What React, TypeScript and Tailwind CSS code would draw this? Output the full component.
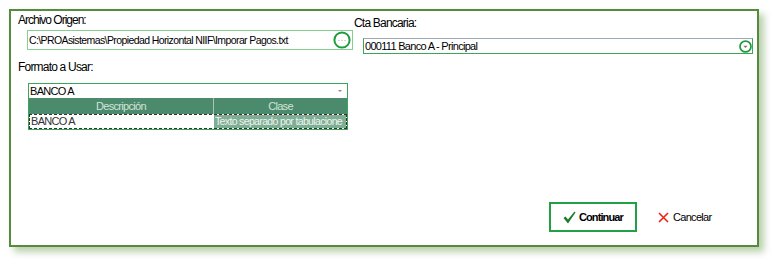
import React from "react";

const font = { fontFamily: '"Liberation Sans", Arial, sans-serif' };

function CircleBtn({ arrow, size }: { arrow?: boolean; size: number }) {
  return (
    <svg width={size} height={size} viewBox="0 0 18 18" className="shrink-0">
      <circle cx="9" cy="9" r="7.6" fill="white" stroke="#1f9a3c" strokeWidth={arrow ? 2.4 : 2} />
      {arrow ? (
        <path d="M6 8 L12 8 L9 11 Z" fill="#777" />
      ) : (
        <g fill="#aaa">
          <rect x="5.5" y="9" width="1" height="1" />
          <rect x="8.5" y="9" width="1" height="1" />
          <rect x="11.5" y="9" width="1" height="1" />
        </g>
      )}
    </svg>
  );
}

export default function App() {
  return (
    <div className="w-[774px] h-[259px] bg-white text-[11px] tracking-[-0.7px] text-black" style={font}>
      <div className="pl-[9px] pt-[9px]">
        <div className="w-[750px] h-[238px] border-2 border-[#568a3f] bg-white shadow-[5px_5px_7px_rgba(100,150,70,0.45)] flex flex-col">
          <div className="flex">
            <div className="w-[343px] pl-[7px]">
              <div className="mt-[2px] leading-[14px] text-[12px] tracking-[-1px]">Archivo Origen:</div>
              <div className="ml-[9px] mt-[3px] w-[326px] h-[20px] border border-[#84d093] flex items-center pl-[1px] pr-[1px]">
                <span className="flex-1 leading-[14px] whitespace-nowrap text-[10.5px] tracking-[-0.6px]">C:\PROAsistemas\Propiedad Horizontal NIIF\Imporar Pagos.txt</span>
                <CircleBtn size={18} />
              </div>
              <div className="mt-[10px] leading-[14px] text-[12px] tracking-[-0.8px]">Formato a Usar:</div>
              <div className="ml-[10px] mt-[9px] w-[320px] border border-[#3aa657]">
                <div className="h-[14px] flex items-center pl-[1px] bg-white">
                  <span className="flex-1 leading-[12px]">BANCO A</span>
                  <svg width="8" height="6" viewBox="0 0 8 6" className="mr-[3px]">
                    <path d="M2 2 L6 2 L4 4 Z" fill="#888" />
                  </svg>
                </div>
                <div className="flex h-[16px] bg-[#4b8a6c] text-[#d3e3d9]">
                  <div className="w-[185px] flex items-center justify-center border-r border-[#a6c6b4]">Descripción</div>
                  <div className="flex-1 flex items-center justify-center">Clase</div>
                </div>
                <div className="flex h-[15px] border border-dashed border-[#333]">
                  <div className="w-[184px] flex items-center pl-[1px] bg-white text-[#333]">BANCO A</div>
                  <div className="flex-1 flex items-center bg-[#7fae95] text-[#eef4f0] whitespace-nowrap overflow-hidden pl-[1px] text-[10.5px] tracking-[-0.65px]">Texto separado por tabulacione</div>
                </div>
              </div>
            </div>
            <div className="flex-1">
              <div className="mt-[5px] leading-[14px] text-[12px] tracking-[-0.8px]">Cta Bancaria:</div>
              <div className="ml-[9px] mt-[8px] w-[390px] h-[16px] border border-[#3aa657] border-t-[#9aaab8] flex items-center pl-[1px]">
                <span className="flex-1 leading-[12px]">000111 Banco A - Principal</span>
                <CircleBtn arrow size={13} />
              </div>
            </div>
          </div>
          <div className="mt-auto mb-[13px] flex items-center pl-[538px]">
            <div className="w-[88px] h-[30px] border-2 border-[#22a046] flex items-center pl-[12px] gap-[3px] font-bold tracking-[-0.9px]">
              <svg width="13" height="13" viewBox="0 0 13 13">
                <path d="M0.5 7 L2.5 5.5 L5 8.5 L11.5 0.5 L12.5 1.5 L5 12.5 Z" fill="#1d7a2a" />
              </svg>
              <span>Continuar</span>
            </div>
            <div className="ml-[21px] flex items-center gap-[4px]">
              <svg width="11" height="11" viewBox="0 0 11 11">
                <path d="M1 1 L10 10 M10 1 L1 10" stroke="#e21" strokeWidth="1.6" />
              </svg>
              <span>Cancelar</span>
            </div>
          </div>
        </div>
      </div>
    </div>
  );
}
